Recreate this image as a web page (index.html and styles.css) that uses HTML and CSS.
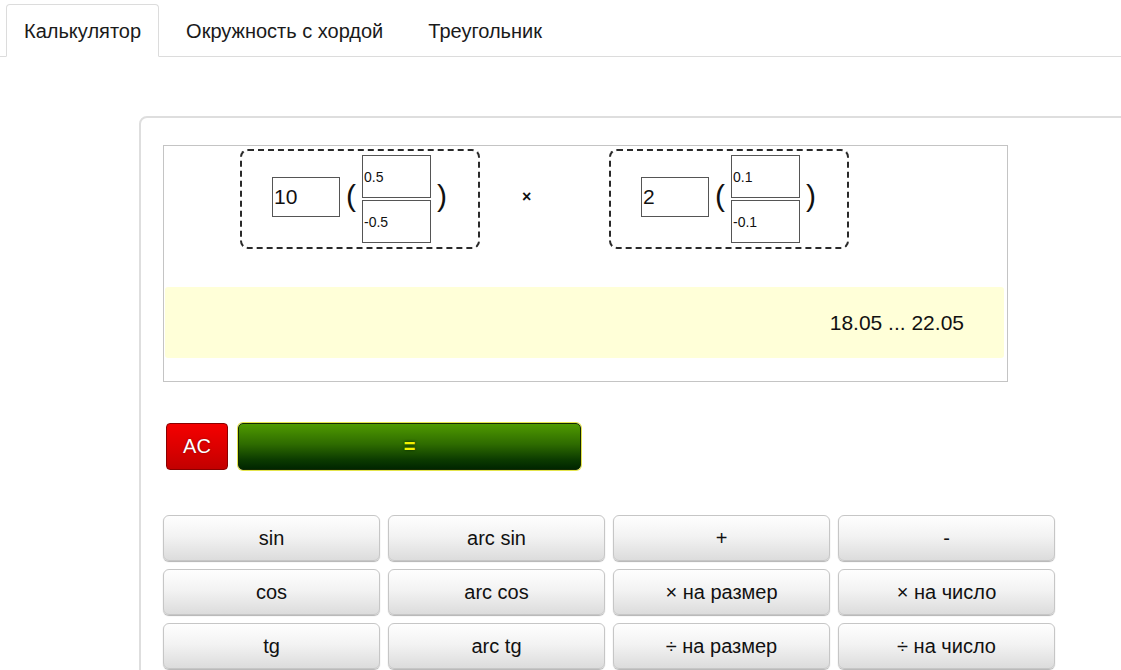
FILE: index.html
```html
<!DOCTYPE html>
<html lang="ru">
<head>
<meta charset="utf-8">
<title>Калькулятор допусков</title>
<link rel="stylesheet" href="styles.css">
</head>
<body>
<nav class="tabs">
  <div class="tab active">Калькулятор</div>
  <div class="tab">Окружность с хордой</div>
  <div class="tab">Треугольник</div>
</nav>

<main class="panel">
  <section class="display">
    <div class="expr">
      <div class="operand">
        <input class="nominal" type="text" value="10">
        <span class="paren">(</span>
        <div class="tol">
          <input class="dev" type="text" value="0.5">
          <input class="dev" type="text" value="-0.5">
        </div>
        <span class="paren">)</span>
      </div>
      <span class="op">×</span>
      <div class="operand">
        <input class="nominal" type="text" value="2">
        <span class="paren">(</span>
        <div class="tol">
          <input class="dev" type="text" value="0.1">
          <input class="dev" type="text" value="-0.1">
        </div>
        <span class="paren">)</span>
      </div>
    </div>
    <div class="result">18.05 ... 22.05</div>
  </section>

  <div class="actions">
    <button class="btn-ac">AC</button>
    <button class="btn-eq">=</button>
  </div>

  <div class="keys">
    <button class="key">sin</button>
    <button class="key">arc sin</button>
    <button class="key">+</button>
    <button class="key">-</button>
    <button class="key">cos</button>
    <button class="key">arc cos</button>
    <button class="key">× на размер</button>
    <button class="key">× на число</button>
    <button class="key">tg</button>
    <button class="key">arc tg</button>
    <button class="key">÷ на размер</button>
    <button class="key">÷ на число</button>
  </div>
</main>
</body>
</html>
```

FILE: styles.css
```css
html, body {
  margin: 0;
  padding: 0;
  background: #fff;
  font-family: "Liberation Sans", Arial, sans-serif;
  color: #111;
  overflow: hidden;
}

/* tab strip */
.tabs {
  display: flex;
  gap: 9px;
  padding: 4px 0 0 6px;
  height: 52px;
  border-bottom: 1px solid #dcdcdc;
}

.tab {
  height: 51px;
  padding: 0 17px;
  line-height: 53px;
  font-size: 20px;
  color: #1a1a1a;
  border: 1px solid transparent;
  border-radius: 4px 4px 0 0;
  white-space: nowrap;
}

.tab.active {
  border-color: #dcdcdc;
  border-bottom-color: #fff;
  background: #fff;
}

/* main calculator panel */
.panel {
  margin: 59px 0 0 139px;
  width: 977px;
  height: 600px;
  padding: 27px 0 0 22px;
  border: 2px solid #dedede;
  border-radius: 8px;
}

.display {
  width: 843px;
  height: 235px;
  border: 1px solid #c4c4c4;
  padding: 3px 0 0 0;
  box-sizing: content-box;
  height: 232px;
}

.expr {
  display: flex;
  align-items: center;
  padding-left: 76px;
}

.operand {
  display: flex;
  align-items: center;
  width: 240px;
  height: 100px;
  box-sizing: border-box;
  padding-left: 30px;
  border: 2px dashed #2a2a2a;
  border-radius: 8px;
}

.op {
  width: 129px;
  box-sizing: border-box;
  padding-left: 42px;
  font-size: 16px;
  font-weight: bold;
  margin-top: -4px;
}

input {
  font-family: "Liberation Sans", Arial, sans-serif;
  color: #111;
  border: 1px solid #555;
  background: #fff;
  margin: 0;
  padding: 0 0 0 1px;
  box-sizing: border-box;
  outline: none;
}

.nominal {
  width: 68px;
  height: 40px;
  font-size: 21px;
  margin-top: -4px;
}

.paren {
  width: 22px;
  text-align: center;
  font-size: 30px;
  font-weight: 300;
  line-height: 1;
  margin-top: -6px;
}

.tol {
  display: flex;
  flex-direction: column;
  gap: 2px;
}

.dev {
  width: 69px;
  height: 43px;
  font-size: 14px;
}

.result {
  margin: 38px 3px 0 1px;
  height: 71px;
  background: #ffffd8;
  border-radius: 3px;
  display: flex;
  align-items: center;
  justify-content: flex-end;
  padding-right: 40px;
  font-size: 21px;
  color: #111;
}

/* AC and = row */
.actions {
  display: flex;
  gap: 10px;
  margin: 41px 0 0 3px;
}

button {
  font-family: "Liberation Sans", Arial, sans-serif;
  cursor: pointer;
  padding: 0;
  margin: 0;
}

.btn-ac {
  width: 62px;
  height: 47px;
  font-size: 20px;
  color: #fff;
  background: linear-gradient(#f40000, #d80000 60%, #c20000);
  border: 1px solid #8a0000;
  border-radius: 4px;
  text-shadow: 0 0 2px rgba(90, 0, 0, 0.7);
}

.btn-eq {
  width: 343px;
  height: 47px;
  font-size: 20px;
  font-weight: bold;
  color: #f2f200;
  background: linear-gradient(#4f9a00, #2e6b00 45%, #0b3a00 80%, #002500);
  border: 1px solid #142a00;
  border-radius: 5px;
  box-shadow: 0 0 0 1px #e4e44c;
  text-shadow: 0 0 3px #002000;
}

/* function keys */
.keys {
  display: grid;
  grid-template-columns: repeat(4, 217px);
  grid-auto-rows: 46px;
  column-gap: 8px;
  row-gap: 8px;
  margin-top: 45px;
}

.key {
  font-size: 20px;
  color: #111;
  background: linear-gradient(#fefefe, #f3f3f3 45%, #dcdcdc);
  border: 1px solid #c6c6c6;
  border-radius: 6px;
  box-shadow: 0 1px 1px rgba(0, 0, 0, 0.3);
}
```
